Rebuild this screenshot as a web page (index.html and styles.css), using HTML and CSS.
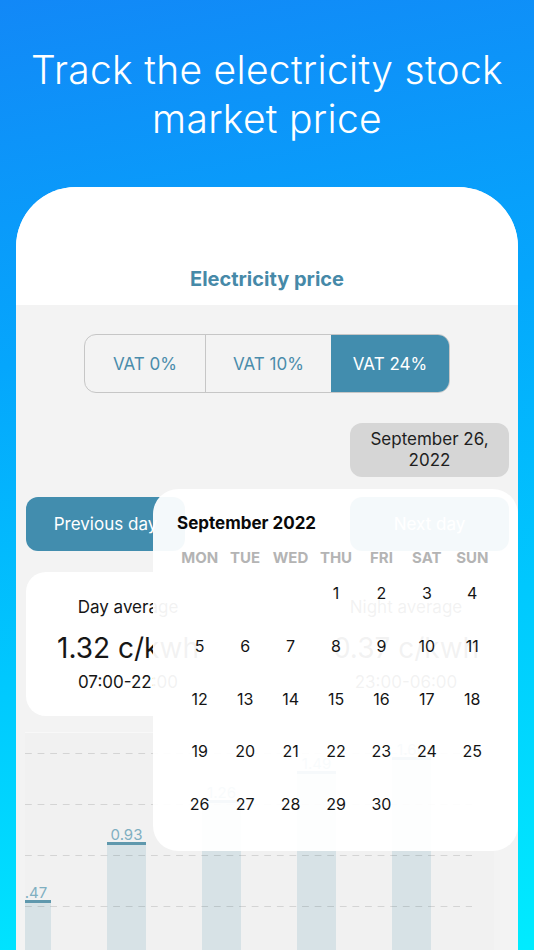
FILE: index.html
```html
<!DOCTYPE html>
<html lang="en">
<head>
<meta charset="utf-8">
<title>Electricity price</title>
<link rel="stylesheet" href="styles.css">
</head>
<body>
<div class="screen">
  <h1 class="hero">Track the electricity stock<br>market price</h1>
  <div class="phone">
    <header class="app-header"><h2>Electricity price</h2></header>
    <main class="app-body">
      <div class="segmented">
        <button class="seg">VAT 0%</button>
        <button class="seg">VAT 10%</button>
        <button class="seg active">VAT 24%</button>
      </div>
      <div class="date-row">
        <button class="date-btn">September 26,<br>2022</button>
      </div>
      <div class="nav-row">
        <button class="nav-btn">Previous day</button>
        <button class="nav-btn">Next day</button>
      </div>
      <section class="avg-card">
        <div class="avg-col">
          <div class="avg-label">Day average</div>
          <div class="avg-value">1.32 c/kwh</div>
          <div class="avg-time">07:00-22:00</div>
        </div>
        <div class="avg-col">
          <div class="avg-label">Night average</div>
          <div class="avg-value">0.37 c/kwh</div>
          <div class="avg-time">23:00-06:00</div>
        </div>
      </section>
      <section class="chart">
        <div class="grid-layer">
          <div class="gridline"></div>
          <div class="gridline"></div>
          <div class="gridline"></div>
          <div class="gridline"></div>
        </div>
        <div class="bars">
          <div class="bar" style="height:59px"><span class="bar-label">0.47</span></div>
          <div class="bar" style="height:117px"><span class="bar-label">0.93</span></div>
          <div class="bar" style="height:159px"><span class="bar-label">1.26</span></div>
          <div class="bar" style="height:188px"><span class="bar-label">1.49</span></div>
          <div class="bar" style="height:202px"><span class="bar-label">1.60</span></div>
        </div>
      </section>
    </main>
    <div class="popover">
      <div class="cal-title">September 2022</div>
      <div class="cal-grid">
        <span class="wd">MON</span><span class="wd">TUE</span><span class="wd">WED</span><span class="wd">THU</span><span class="wd">FRI</span><span class="wd">SAT</span><span class="wd">SUN</span>
        <span></span><span></span><span></span><span class="d">1</span><span class="d">2</span><span class="d">3</span><span class="d">4</span>
        <span class="d">5</span><span class="d">6</span><span class="d">7</span><span class="d">8</span><span class="d">9</span><span class="d">10</span><span class="d">11</span>
        <span class="d">12</span><span class="d">13</span><span class="d">14</span><span class="d">15</span><span class="d">16</span><span class="d">17</span><span class="d">18</span>
        <span class="d">19</span><span class="d">20</span><span class="d">21</span><span class="d">22</span><span class="d">23</span><span class="d">24</span><span class="d">25</span>
        <span class="d">26</span><span class="d">27</span><span class="d">28</span><span class="d">29</span><span class="d">30</span><span></span><span></span>
      </div>
    </div>
  </div>
</div>
</body>
</html>
```
FILE: styles.css
```css
* { box-sizing: border-box; }
html, body { margin: 0; padding: 0; }
body {
  width: 534px;
  height: 950px;
  overflow: hidden;
  font-family: "Inter", "Roboto", sans-serif;
}
.screen {
  height: 950px;
  display: flex;
  flex-direction: column;
  background: linear-gradient(170deg, #1288f7 0%, #05a6fc 35%, #00c8fe 65%, #00ecff 100%);
}
.hero {
  margin: 0;
  padding-top: 45px;
  height: 187px;
  color: #fff;
  font-weight: 300;
  font-size: 39px;
  line-height: 49px;
  text-align: center;
  letter-spacing: 0.3px;
}
.phone {
  position: relative;
  flex: 1;
  margin: 0 16px;
  background: #f3f3f3;
  border-radius: 60px 60px 0 0;
  overflow: hidden;
}
.app-header {
  height: 118px;
  background: #fff;
  display: flex;
  align-items: flex-end;
  justify-content: center;
  padding-bottom: 14px;
}
.app-header h2 {
  margin: 0;
  font-size: 20px;
  font-weight: 700;
  color: #4689a8;
}
.app-body {
  display: flex;
  flex-direction: column;
}
button {
  font-family: inherit;
  border: none;
  padding: 0;
}
.segmented {
  margin: 29px auto 0;
  width: 366px;
  height: 59px;
  display: flex;
  border: 1px solid #c6c6c6;
  border-radius: 12px;
  overflow: hidden;
}
.seg {
  background: transparent;
  color: #4a8cab;
  font-size: 17px;
  width: 120px;
}
.seg + .seg { border-left: 1px solid #c6c6c6; }
.seg:nth-child(2) { width: 126px; }
.seg.active {
  background: #428dae;
  color: #fff;
  border-left: none;
  flex: 1;
}
.date-row {
  display: flex;
  justify-content: flex-end;
  padding-right: 9px;
  margin-top: 30px;
}
.date-btn {
  width: 159px;
  height: 54px;
  border-radius: 12px;
  background: #d6d6d6;
  color: #1e1e1e;
  font-size: 17px;
  line-height: 21px;
}
.nav-row {
  display: flex;
  justify-content: space-between;
  padding: 0 9px 0 10px;
  margin-top: 20px;
}
.nav-btn {
  width: 159px;
  height: 54px;
  border-radius: 12px;
  background: #428dae;
  color: #fff;
  font-size: 17px;
}
.avg-card {
  margin: 21px 10px 0 10px;
  height: 144px;
  background: #fff;
  border-radius: 20px;
  display: flex;
  justify-content: space-between;
}
.avg-col {
  width: 204px;
  display: flex;
  flex-direction: column;
  align-items: center;
  padding-top: 24px;
  color: #161616;
}
.avg-label { font-size: 17px; line-height: 22px; }
.avg-value { font-size: 28px; line-height: 34px; margin-top: 13px; }
.avg-time { font-size: 17px; line-height: 22px; margin-top: 6px; }
.chart {
  margin: 16px 24px 0 9px;
  height: 240px;
  background: #f1f1f1;
  border-top: 1px solid #f8f8f8;
  display: grid;
  overflow: hidden;
}
.grid-layer, .bars { grid-area: 1 / 1; }
.grid-layer {
  z-index: 1;
  display: flex;
  flex-direction: column;
  gap: 50px;
  padding-top: 20px;
  padding-right: 22px;
}
.gridline {
  height: 1px;
  background-image: linear-gradient(to right, rgba(0,0,0,0.12) 55%, transparent 55%);
  background-size: 12.6px 1px;
}
.bars {
  display: flex;
  align-items: flex-end;
  gap: 56px;
  margin-left: -13px;
  padding-bottom: 13px;
}
.bar {
  flex: 0 0 39px;
  background: #d7e2e6;
  border-top: 3px solid #5f98ad;
  position: relative;
  display: flex;
  justify-content: center;
}
.bar-label {
  position: absolute;
  bottom: 100%;
  margin-bottom: 1px;
  font-size: 15px;
  color: #7fafc1;
  line-height: 18px;
}
.popover {
  position: absolute;
  left: 137px;
  top: 302px;
  right: 0;
  height: 362px;
  background: rgba(255,255,255,0.945);
  border-radius: 25px;
  padding: 22px 23px 0 24px;
  z-index: 5;
}
.cal-title {
  font-size: 17px;
  font-weight: 700;
  color: #0a0a0a;
  line-height: 24px;
}
.cal-grid {
  margin-top: 14px;
  display: grid;
  grid-template-columns: repeat(7, 1fr);
  grid-template-rows: 18px repeat(5, 52.7px);
  align-items: center;
  text-align: center;
}
.wd {
  font-size: 15px;
  font-weight: 700;
  color: #b4b4b4;
  line-height: 18px;
}
.cal-grid .d {
  font-size: 16px;
  color: #141414;
}
```
